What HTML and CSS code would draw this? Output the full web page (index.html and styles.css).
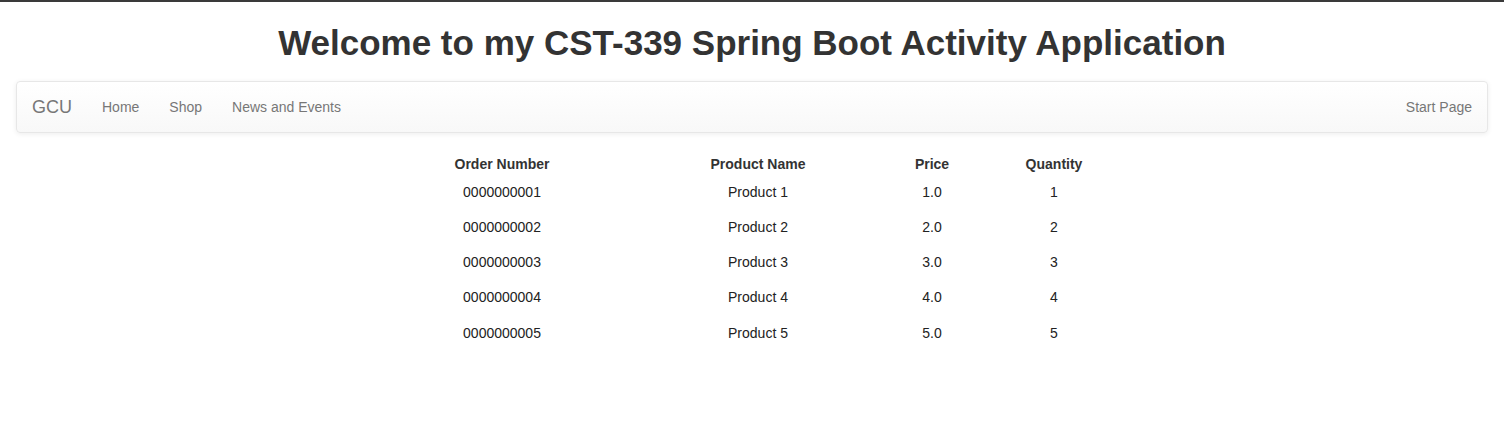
FILE: index.html
```html
<!DOCTYPE html>
<html lang="en">
<head>
<meta charset="utf-8">
<title>Orders</title>
<link rel="stylesheet" href="styles.css">
</head>
<body>
<div class="topbar"></div>
<h1 class="title">Welcome to my CST-339 Spring Boot Activity Application</h1>
<div class="page">
  <nav class="navbar">
    <a class="brand" href="#">GCU</a>
    <ul class="nav-links">
      <li><a href="#">Home</a></li>
      <li><a href="#">Shop</a></li>
      <li><a href="#">News and Events</a></li>
    </ul>
    <ul class="nav-links nav-right">
      <li><a href="#">Start Page</a></li>
    </ul>
  </nav>
  <table class="orders">
    <thead>
      <tr>
        <th class="c1">Order Number</th>
        <th class="c2">Product Name</th>
        <th class="c3">Price</th>
        <th class="c4">Quantity</th>
      </tr>
    </thead>
    <tbody>
      <tr><td>0000000001</td><td>Product 1</td><td>1.0</td><td>1</td></tr>
      <tr><td>0000000002</td><td>Product 2</td><td>2.0</td><td>2</td></tr>
      <tr><td>0000000003</td><td>Product 3</td><td>3.0</td><td>3</td></tr>
      <tr><td>0000000004</td><td>Product 4</td><td>4.0</td><td>4</td></tr>
      <tr><td>0000000005</td><td>Product 5</td><td>5.0</td><td>5</td></tr>
    </tbody>
  </table>
</div>
</body>
</html>
```

FILE: styles.css
```css
html, body {
  margin: 0;
  padding: 0;
  background: #fff;
}
body {
  font-family: "Liberation Sans", Arial, Helvetica, sans-serif;
  font-size: 14px;
  line-height: 20px;
  color: #333;
}
.topbar {
  height: 2px;
  background: #3a3a3a;
}
.title {
  margin: 21px 0 19px;
  font-size: 35px;
  line-height: 39px;
  font-weight: bold;
  text-align: center;
  color: #333;
}
.page {
  padding: 0 16px;
}
.navbar {
  display: flex;
  align-items: center;
  min-height: 50px;
  border: 1px solid #e7e7e7;
  border-radius: 4px;
  background: linear-gradient(to bottom, #ffffff 0%, #f8f8f8 100%);
  box-shadow: inset 0 1px 0 rgba(255,255,255,.15), 0 1px 5px rgba(0,0,0,.075);
  margin-bottom: 21px;
}
.brand {
  padding: 15px;
  font-size: 18px;
  line-height: 20px;
  color: #777;
  text-decoration: none;
}
.nav-links {
  display: flex;
  list-style: none;
  margin: 0;
  padding: 0;
}
.nav-links a {
  display: block;
  padding: 15px;
  line-height: 20px;
  color: #777;
  text-decoration: none;
}
.nav-right {
  margin-left: auto;
}
.orders {
  border-collapse: collapse;
  border-spacing: 0;
  margin: 0 auto;
  table-layout: fixed;
  width: 756px;
}
.orders th, .orders td {
  padding: 0;
  text-align: center;
}
.orders th {
  font-weight: bold;
  height: 20px;
}
.orders td {
  padding: 7.65px 0;
  color: #222;
}
.c1 { width: 256px; }
.c2 { width: 256px; }
.c3 { width: 92px; }
.c4 { width: 152px; }
```
